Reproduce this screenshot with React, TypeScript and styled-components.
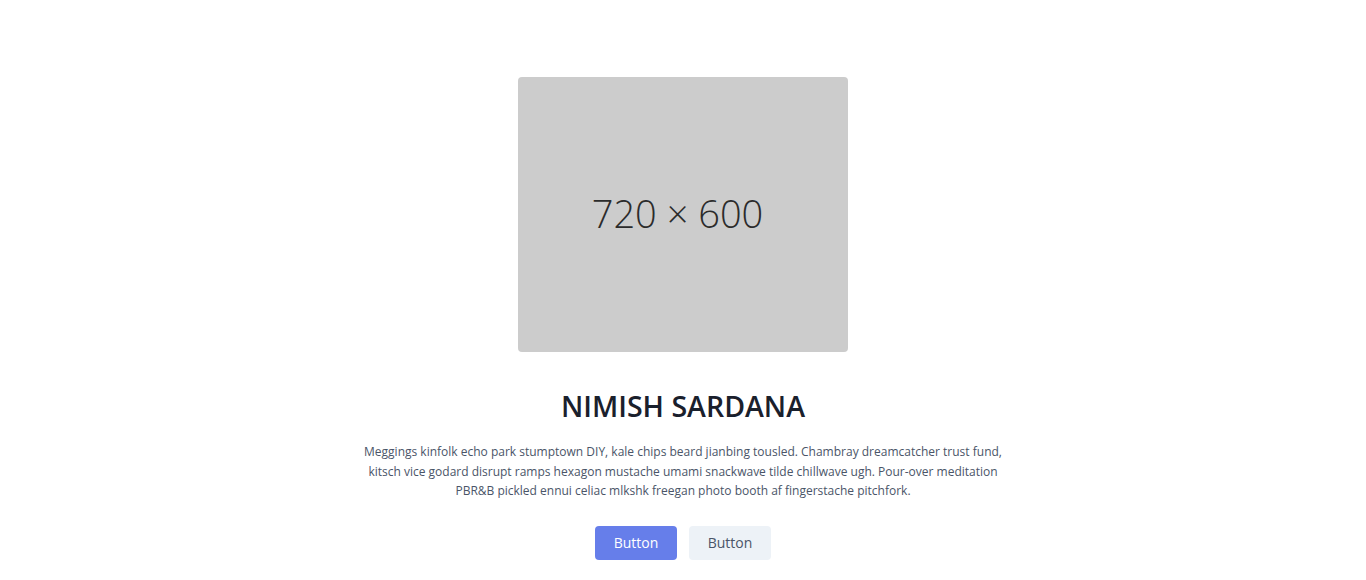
import styled, { createGlobalStyle } from "styled-components";

const GlobalStyle = createGlobalStyle`
  html, body {
    margin: 0;
    padding: 0;
    background: #ffffff;
  }
  body {
    font-family: "Open Sans", "Noto Sans", sans-serif;
  }
`;

export default function App() {
  return (
    <>
      <GlobalStyle />
      <Section>
        <Container>
          <Placeholder>
            <PlaceholderLabel>720 × 600</PlaceholderLabel>
          </Placeholder>
          <Content>
            <Title>NIMISH SARDANA</Title>
            <Text>
              Meggings kinfolk echo park stumptown DIY, kale chips beard jianbing tousled. Chambray
              dreamcatcher trust fund, kitsch vice godard disrupt ramps hexagon mustache umami
              snackwave tilde chillwave ugh. Pour-over meditation PBR&amp;B pickled ennui celiac
              mlkshk freegan photo booth af fingerstache pitchfork.
            </Text>
            <Actions>
              <Button $primary>Button</Button>
              <Button>Button</Button>
            </Actions>
          </Content>
        </Container>
      </Section>
    </>
  );
}

const Section = styled.section`
  color: #4a5568;
`;

const Container = styled.div`
  display: flex;
  flex-direction: column;
  align-items: center;
  justify-content: center;
  padding: 77px 20px 20px;
`;

const Placeholder = styled.div`
  width: 330px;
  height: 275px;
  background: #cccccc;
  border-radius: 4px;
  display: flex;
  align-items: center;
  justify-content: center;
  margin-bottom: 36px;
`;

const PlaceholderLabel = styled.span`
  font-family: "Open Sans", sans-serif;
  font-weight: 300;
  font-size: 38px;
  line-height: 1;
  color: #2b2b2b;
  margin: 0 11px 3px 0;
`;

const Content = styled.div`
  width: 660px;
  text-align: center;
`;

const Title = styled.h1`
  margin: 0 0 18px;
  font-size: 28.5px;
  line-height: 36px;
  font-weight: 600;
  color: #1a202c;
`;

const Text = styled.p`
  margin: 0 0 25px;
  font-size: 12px;
  line-height: 19.5px;
  color: #4a5568;
`;

const Actions = styled.div`
  display: flex;
  justify-content: center;
  gap: 12px;
`;

const Button = styled.button<{ $primary?: boolean }>`
  width: 82px;
  height: 34px;
  border: 0;
  border-radius: 4px;
  font-family: "Open Sans", sans-serif;
  font-size: 14px;
  cursor: pointer;
  background: ${(p) => (p.$primary ? "#667eea" : "#edf2f7")};
  color: ${(p) => (p.$primary ? "#ffffff" : "#4a5568")};
`;
